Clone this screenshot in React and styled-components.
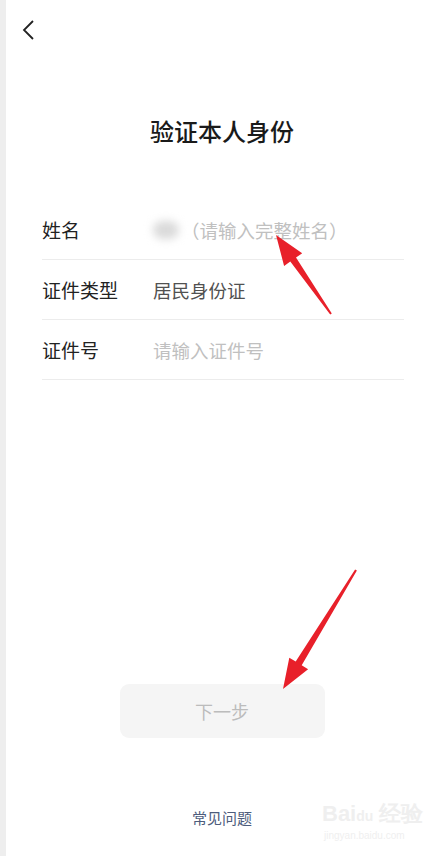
import React from 'react';
import styled, { createGlobalStyle } from 'styled-components';

const GlobalStyle = createGlobalStyle`
  html, body {
    margin: 0;
    padding: 0;
    background: #ffffff;
  }
  body {
    font-family: 'Noto Sans CJK SC', 'Noto Sans', sans-serif;
  }
`;

const rows = [
  { label: '姓名', value: '（请输入完整姓名）', kind: 'name' },
  { label: '证件类型', value: '居民身份证', kind: 'value' },
  { label: '证件号', value: '请输入证件号', kind: 'placeholder' },
];

// arrow polygon from tail to tip
const arrowPoints = (x1, y1, x2, y2) => {
  const dx = x2 - x1;
  const dy = y2 - y1;
  const len = Math.hypot(dx, dy);
  const ux = dx / len;
  const uy = dy / len;
  const nx = -uy;
  const ny = ux;
  const head = 30;
  const headW = 11;
  const bx = x2 - ux * head;
  const by = y2 - uy * head;
  const p = (x, y) => `${x.toFixed(1)},${y.toFixed(1)}`;
  return [
    p(x1 + nx * 1, y1 + ny * 1),
    p(bx + nx * 3.5, by + ny * 3.5),
    p(bx + nx * headW, by + ny * headW),
    p(x2, y2),
    p(bx - nx * headW, by - ny * headW),
    p(bx - nx * 3.5, by - ny * 3.5),
    p(x1 - nx * 1, y1 - ny * 1),
  ].join(' ');
};

const App = () => {
  return (
    <>
      <GlobalStyle />
      <Page>
        <Header>
          <BackButton aria-label="返回">
            <svg width="14" height="22" viewBox="0 0 14 22">
              <polyline points="11,2 2,11 11,20" fill="none" stroke="#222" strokeWidth="1.8" />
            </svg>
          </BackButton>
        </Header>
        <Title>验证本人身份</Title>
        <Form>
          {rows.map(r => (
            <Row key={r.label}>
              <Label>{r.label}</Label>
              <Value $kind={r.kind}>
                {r.kind === 'name' && <Blur />}
                <span>{r.value}</span>
              </Value>
            </Row>
          ))}
        </Form>
        <NextButton>下一步</NextButton>
        <Faq>常见问题</Faq>
        <Watermark>
          <div className="logo">Bai<span>du</span> 经验</div>
          <div className="url">jingyan.baidu.com</div>
        </Watermark>
        <Annotations width="434" height="856" viewBox="0 0 434 856">
          <polygon points={arrowPoints(331, 314, 276, 235)} fill="#e8202a" />
          <polygon points={arrowPoints(356, 570, 283, 689)} fill="#e8202a" />
        </Annotations>
      </Page>
    </>
  );
};

export default App;

const Page = styled.div`
  position: relative;
  width: 434px;
  min-height: 856px;
  box-sizing: border-box;
  border-left: 6px solid #eeeeee;
  display: flex;
  flex-direction: column;
  align-items: center;
  overflow: hidden;
`;

const Header = styled.div`
  align-self: stretch;
  height: 60px;
  display: flex;
  align-items: center;
  padding-left: 16px;
`;

const BackButton = styled.button`
  border: 0;
  background: none;
  padding: 0;
  display: flex;
  align-items: center;
`;

const Title = styled.h1`
  margin: 54px 0 0 4px;
  font-size: 24px;
  line-height: 34px;
  font-weight: 500;
  color: #1a1a1a;
`;

const Form = styled.div`
  align-self: stretch;
  margin: 52px 30px 0 36px;
  display: flex;
  flex-direction: column;
`;

const Row = styled.div`
  height: 60px;
  display: grid;
  grid-template-columns: 111px 1fr;
  align-items: center;
  border-bottom: 1px solid #ececec;
  box-sizing: border-box;
`;

const Label = styled.div`
  font-size: 19px;
  color: #222;
`;

const Value = styled.div`
  display: flex;
  align-items: center;
  font-size: 18.5px;
  color: ${p => (p.$kind === 'value' ? '#515151' : '#c0c0c0')};
`;

const Blur = styled.div`
  width: 26px;
  height: 18px;
  margin-right: 2px;
  border-radius: 9px;
  background: #dadada;
  filter: blur(4px);
`;

const NextButton = styled.button`
  margin: 304px 0 0 4px;
  width: 205px;
  height: 54px;
  border: 0;
  border-radius: 9px;
  background: #f5f5f5;
  color: #bcbcbc;
  font-family: inherit;
  font-size: 18px;
`;

const Faq = styled.div`
  margin: 69px 0 0 4px;
  font-size: 15px;
  line-height: 22px;
  color: #4d5c7c;
`;

const Watermark = styled.div`
  position: absolute;
  left: 316px;
  top: 800px;
  color: #efefef;
  font-family: 'Liberation Sans', sans-serif;
  .logo {
    font-size: 22px;
    font-weight: 700;
    line-height: 28px;
    span {
      font-size: 14px;
    }
  }
  .url {
    font-size: 10px;
    line-height: 12px;
    margin-left: 2px;
  }
`;

const Annotations = styled.svg`
  position: absolute;
  left: -6px;
  top: 0;
  pointer-events: none;
`;
